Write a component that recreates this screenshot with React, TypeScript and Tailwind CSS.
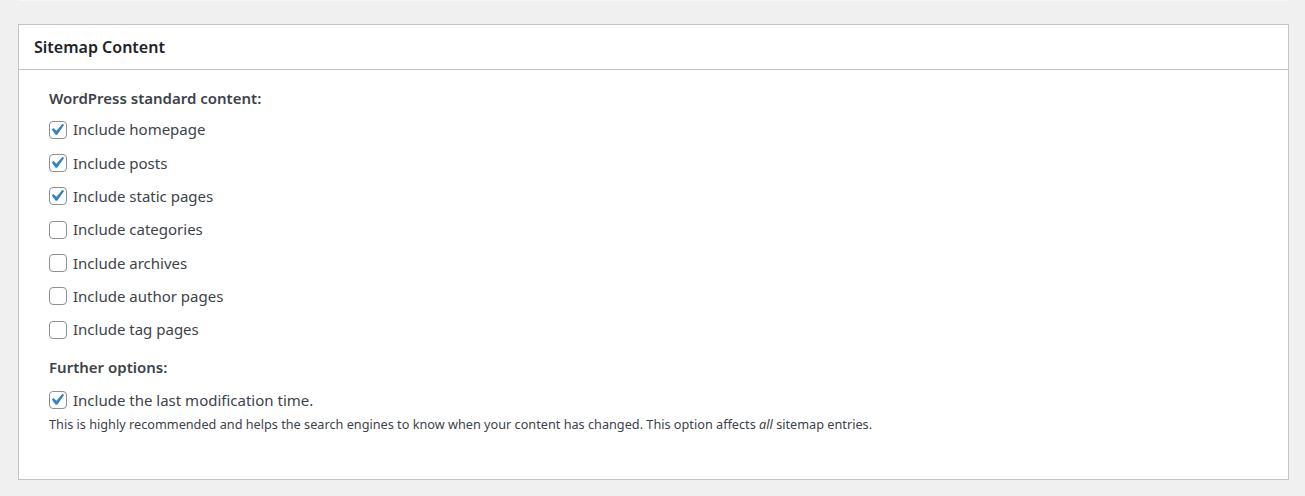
const standard = [
  { label: "Include homepage", on: true },
  { label: "Include posts", on: true },
  { label: "Include static pages", on: true },
  { label: "Include categories", on: false },
  { label: "Include archives", on: false },
  { label: "Include author pages", on: false },
  { label: "Include tag pages", on: false },
];

function Box({ on }: { on: boolean }) {
  return (
    <span className="relative w-[18px] h-[18px] shrink-0 rounded-[4px] border border-[#8c8f94] bg-white">
      {on && (
        <svg viewBox="0 0 20 20" className="absolute left-[-5px] top-[-4px] w-[23.6px] h-[23.6px]">
          <path d="M14.83 4.89l1.34.94-5.81 8.38H9.02L5.78 9.67l1.34-1.25 2.57 2.4z" fill="#3582c4" />
        </svg>
      )}
    </span>
  );
}

function Row({ label, on }: { label: string; on: boolean }) {
  return (
    <label className="h-[33.33px] flex items-center gap-[6px] text-[15px] text-[#3c434a]">
      <Box on={on} />
      <span>{label}</span>
    </label>
  );
}

export default function App() {
  return (
    <div
      className="min-h-[496px] bg-[#f0f0f1] pl-[18px]"
      style={{ fontFamily: "'Noto Sans', 'Open Sans', sans-serif" }}
    >
      <div className="w-[1271px] h-px bg-[#f6f7f7]" />
      <div className="mt-[23px] w-[1271px] h-[456px] bg-white border border-[#c3c4c7]">
        <div className="h-[45px] border-b border-[#c3c4c7] flex items-center pl-[15px]">
          <h2 className="text-[16px] font-semibold text-[#1d2327]">Sitemap Content</h2>
        </div>
        <div className="pl-[30px] pt-[16px]">
          <h3 className="h-[24px] flex items-center text-[15px] font-semibold text-[#3c434a]">
            WordPress standard content:
          </h3>
          <div className="mt-[3px] flex flex-col">
            {standard.map((s) => (
              <Row key={s.label} label={s.label} on={s.on} />
            ))}
          </div>
          <h3 className="mt-[9px] h-[24px] flex items-center text-[15px] font-semibold text-[#3c434a]">
            Further options:
          </h3>
          <div className="mt-[4px]">
            <Row label="Include the last modification time." on={true} />
          </div>
          <p className="-mt-[2px] text-[12.7px] text-[#3c434a] leading-[18px]">
            This is highly recommended and helps the search engines to know when your content has changed. This option affects <i>all</i> sitemap entries.
          </p>
        </div>
      </div>
    </div>
  );
}
